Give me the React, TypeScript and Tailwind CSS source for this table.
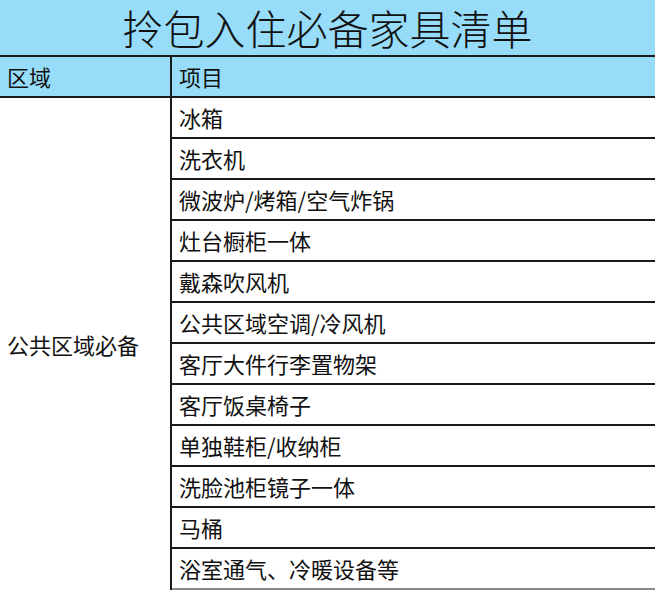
const items = [
  "冰箱",
  "洗衣机",
  "微波炉/烤箱/空气炸锅",
  "灶台橱柜一体",
  "戴森吹风机",
  "公共区域空调/冷风机",
  "客厅大件行李置物架",
  "客厅饭桌椅子",
  "单独鞋柜/收纳柜",
  "洗脸池柜镜子一体",
  "马桶",
  "浴室通气、冷暖设备等",
];

export default function App() {
  return (
    <div
      className="w-[655px] h-[590px] overflow-hidden bg-white text-[#111]"
      style={{ fontFamily: '"Noto Sans CJK SC", "Noto Sans", sans-serif' }}
    >
      <div className="h-[55px] bg-[#97dcf8] flex items-center justify-center text-[41px] leading-[55px] font-light">
        拎包入住必备家具清单
      </div>
      <div className="grid grid-cols-[172px_1fr] border-t-2 border-[#1a1a1a]">
        <div className="h-[41px] bg-[#97dcf8] border-r-2 border-b-2 border-[#1a1a1a] flex items-center pl-[7px] text-[22px]">
          区域
        </div>
        <div className="h-[41px] bg-[#97dcf8] border-b-2 border-[#1a1a1a] flex items-center pl-[7px] text-[22px]">
          项目
        </div>
        <div className="row-span-12 border-r-2 border-[#1a1a1a] flex items-center pl-[7px] text-[22px]">
          公共区域必备
        </div>
        {items.map((item, i) => (
          <div
            key={i}
            className={`h-[41px] flex items-center pl-[7px] text-[22px] border-b-2 ${
              i === items.length - 1 ? "border-[#888]" : "border-[#1a1a1a]"
            }`}
          >
            {item}
          </div>
        ))}
      </div>
    </div>
  );
}
